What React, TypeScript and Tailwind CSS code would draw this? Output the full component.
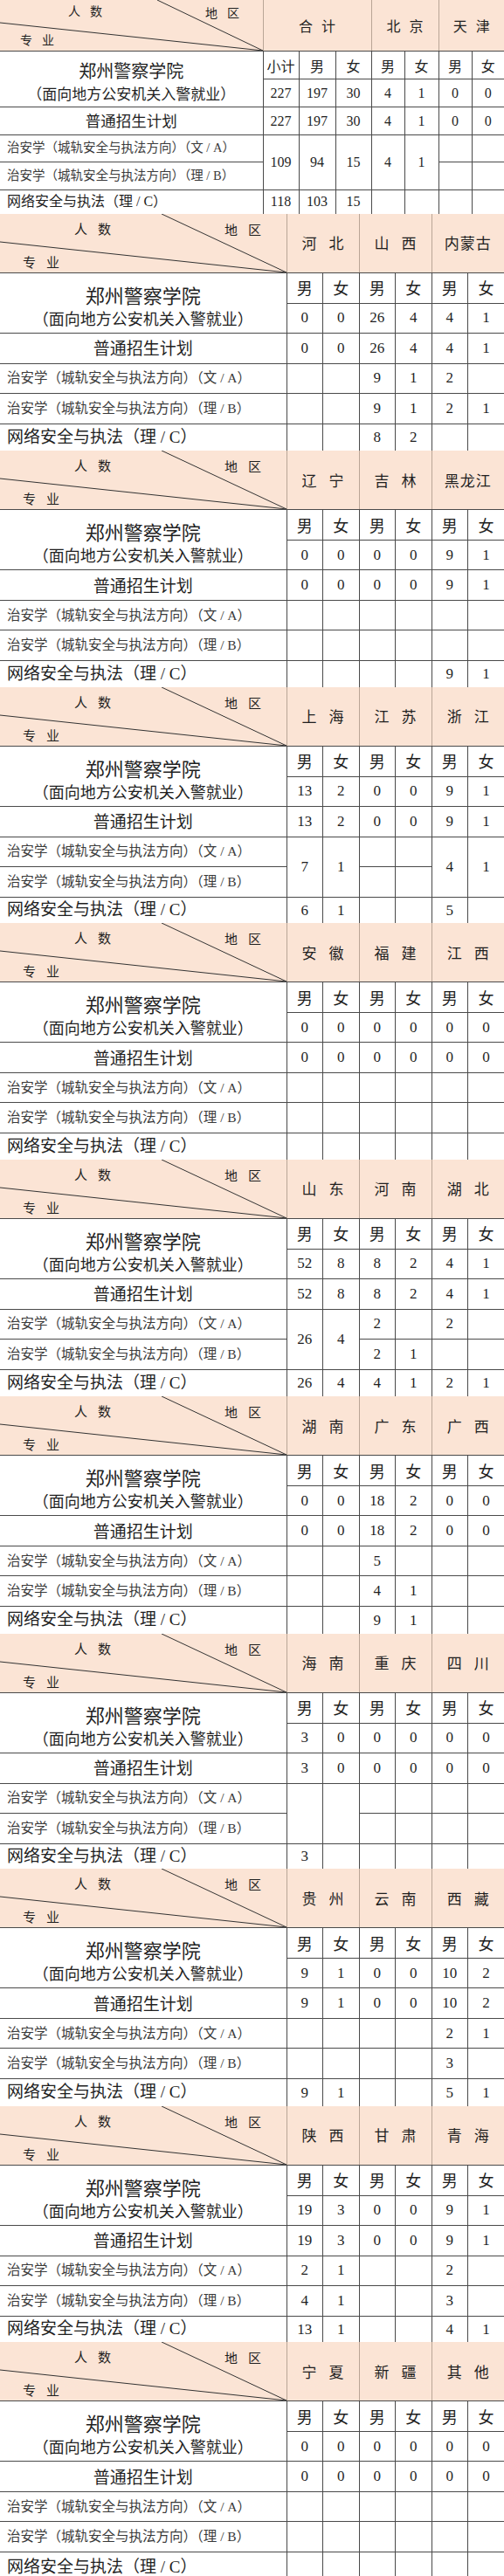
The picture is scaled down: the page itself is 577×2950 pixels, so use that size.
import React from "react";

type Cell = string | { m: string };

interface Sheet {
  regions: string[];
  total: string[];
  a: Cell[];
  b: string[];
  c: string[];
  cH: string;
}

const E6 = ["", "", "", "", "", ""];
const Z6 = ["0", "0", "0", "0", "0", "0"];

const sheets: Sheet[] = [
  { regions: ["河北", "山西", "内蒙古"], total: ["0", "0", "26", "4", "4", "1"], a: ["", "", "9", "1", "2", ""], b: ["", "", "9", "1", "2", "1"], c: ["", "", "8", "2", "", ""], cH: "h-[31px]" },
  { regions: ["辽宁", "吉林", "黑龙江"], total: ["0", "0", "0", "0", "9", "1"], a: E6, b: E6, c: ["", "", "", "", "9", "1"], cH: "h-[30px]" },
  { regions: ["上海", "江苏", "浙江"], total: ["13", "2", "0", "0", "9", "1"], a: [{ m: "7" }, { m: "1" }, "", "", { m: "4" }, { m: "1" }], b: E6, c: ["6", "1", "", "", "5", ""], cH: "h-[30px]" },
  { regions: ["安徽", "福建", "江西"], total: Z6, a: E6, b: E6, c: E6, cH: "h-[30px]" },
  { regions: ["山东", "河南", "湖北"], total: ["52", "8", "8", "2", "4", "1"], a: [{ m: "26" }, { m: "4" }, "2", "", "2", ""], b: ["", "", "2", "1", "", ""], c: ["26", "4", "4", "1", "2", "1"], cH: "h-[31px]" },
  { regions: ["湖南", "广东", "广西"], total: ["0", "0", "18", "2", "0", "0"], a: ["", "", "5", "", "", ""], b: ["", "", "4", "1", "", ""], c: ["", "", "9", "1", "", ""], cH: "h-[31px]" },
  { regions: ["海南", "重庆", "四川"], total: ["3", "0", "0", "0", "0", "0"], a: [{ m: "" }, { m: "" }, "", "", "", ""], b: E6, c: ["3", "", "", "", "", ""], cH: "h-[28px]" },
  { regions: ["贵州", "云南", "西藏"], total: ["9", "1", "0", "0", "10", "2"], a: ["", "", "", "", "2", "1"], b: ["", "", "", "", "3", ""], c: ["9", "1", "", "", "5", "1"], cH: "h-[31px]" },
  { regions: ["陕西", "甘肃", "青海"], total: ["19", "3", "0", "0", "9", "1"], a: ["2", "1", "", "", "2", ""], b: ["4", "1", "", "", "3", ""], c: ["13", "1", "", "", "4", "1"], cH: "h-[30px]" },
  { regions: ["宁夏", "新疆", "其他"], total: Z6, a: E6, b: E6, c: E6, cH: "h-[34px]" },
];

const first = {
  regions: [
    { name: "合计", span: 3 },
    { name: "北京", span: 2 },
    { name: "天津", span: 2 },
  ],
  sub: ["小计", "男", "女", "男", "女", "男", "女"],
  total: ["227", "197", "30", "4", "1", "0", "0"],
  a: [{ m: "109" }, { m: "94" }, { m: "15" }, { m: "4" }, { m: "1" }, "", ""] as Cell[],
  b: ["", "", "", "", "", "", ""],
  c: ["118", "103", "15", "", "", "", ""],
};

const cjk = "font-['Noto_Sans_CJK_SC',sans-serif]";
const serif = "font-['Liberation_Serif','Noto_Sans_CJK_SC',serif]";
const line = "border-[#4a4a4a]";

function DiagHead({ small }: { small?: boolean }) {
  if (small) {
    return (
      <div className={`relative h-[58px] w-[301px] overflow-hidden text-[14px] leading-[18px] font-normal text-[#1f1f1f] ${cjk}`}>
        <svg className="absolute inset-0" width="301" height="58">
          <line x1="180" y1="0" x2="301" y2="58" stroke="#333" strokeWidth="1" />
          <line x1="0" y1="26" x2="301" y2="58" stroke="#333" strokeWidth="1" />
        </svg>
        <span className="absolute left-[78px] top-[3px] tracking-[11px]">人数</span>
        <span className="absolute left-[235px] top-[5px] tracking-[11px]">地区</span>
        <span className="absolute left-[23px] top-[36px] tracking-[11px]">专业</span>
      </div>
    );
  }
  return (
    <div className={`relative h-[67px] w-[328px] overflow-hidden text-[15px] leading-[20px] font-normal text-[#1f1f1f] ${cjk}`}>
      <svg className="absolute inset-0" width="328" height="67">
        <line x1="185" y1="0" x2="328" y2="67" stroke="#333" strokeWidth="1" />
        <line x1="0" y1="32" x2="328" y2="67" stroke="#333" strokeWidth="1" />
      </svg>
      <span className="absolute left-[85px] top-[7px] tracking-[12px]">人数</span>
      <span className="absolute left-[257px] top-[8px] tracking-[12px]">地区</span>
      <span className="absolute left-[26px] top-[45px] tracking-[12px]">专业</span>
    </div>
  );
}

function cellCls(i: number, n: number, bottom: boolean) {
  return `p-0 text-center align-middle ${line} ${i < n - 1 ? "border-r" : ""} ${bottom ? "border-b" : ""}`;
}

function Table({
  small,
  regions,
  sub,
  total,
  a,
  b,
  c,
  cH,
}: {
  small?: boolean;
  regions: { name: string; span: number }[];
  sub: string[];
  total: string[];
  a: Cell[];
  b: string[];
  c: string[];
  cH: string;
}) {
  const n = sub.length;
  const cols = small
    ? ["w-[41px]", "w-[42px]", "w-[41px]", "w-[38px]", "w-[39px]", "w-[38px]", "w-[37px]"]
    : ["w-[41.5px]", "w-[41.5px]", "w-[41.5px]", "w-[41.5px]", "w-[41.5px]", "w-[41.5px]"];
  const z = small
    ? {
        head: "h-[58px]",
        r1: "h-[32px]",
        r2: "h-[32px]",
        r3: "h-[32px]",
        r4: "h-[31px]",
        r5: "h-[32px]",
        region: "text-[16px]",
        sub: "text-[16px]",
        num: "text-[16px]",
        school: "text-[20px] leading-[26px]",
        school2: "text-[17px] leading-[26px]",
        schoolBox: "pt-[6px]",
        plan: "text-[17.5px]",
        ab: "text-[14.5px]",
        cl: "text-[16px]",
      }
    : {
        head: "h-[67px]",
        r1: "h-[35px]",
        r2: "h-[34px]",
        r3: "h-[35px]",
        r4: "h-[34px]",
        r5: "h-[35px]",
        region: "text-[17px]",
        sub: "text-[18px]",
        num: "text-[17px]",
        school: "text-[22px] leading-[27px]",
        school2: "text-[18px] leading-[27px]",
        schoolBox: "pt-[8px]",
        plan: "text-[19px]",
        ab: "text-[15.5px]",
        cl: "text-[19px]",
      };

  const spaced = (name: string) =>
    name.length === 2
      ? small
        ? "tracking-[10px] pl-[10px]"
        : "tracking-[14px] pl-[14px]"
      : "tracking-[1px]";

  const merged = a.map((x) => typeof x === "object");

  return (
    <table className="w-[577px] table-fixed border-collapse text-[#1f1f1f]">
      <colgroup>
        <col className={small ? "w-[301px]" : "w-[328px]"} />
        {cols.map((w, i) => (
          <col key={i} className={w} />
        ))}
      </colgroup>
      <tbody>
        <tr className={z.head}>
          <th className={`p-0 bg-[#fbe4d5] font-normal border-b border-r ${line} border-r-[#b9a596]`}>
            <DiagHead small={small} />
          </th>
          {regions.map((r, i) => (
            <th
              key={i}
              colSpan={r.span}
              className={`p-0 bg-[#fbe4d5] border-b ${line} font-normal ${cjk} ${z.region} ${
                i < regions.length - 1 ? "border-r border-r-[#b9a596]" : ""
              }`}
            >
              <span className={spaced(r.name)}>{r.name}</span>
            </th>
          ))}
        </tr>
        <tr className={z.r1}>
          <td rowSpan={2} className={`p-0 text-center align-middle border-r border-b ${line} ${cjk}`}>
            <div className={z.schoolBox}>
              <div className={z.school}>郑州警察学院</div>
              <div className={z.school2}>（面向地方公安机关入警就业）</div>
            </div>
          </td>
          {sub.map((s, i) => (
            <td key={i} className={`${cellCls(i, n, true)} ${cjk} ${z.sub}`}>
              {s}
            </td>
          ))}
        </tr>
        <tr className={z.r2}>
          {total.map((v, i) => (
            <td key={i} className={`${cellCls(i, n, true)} ${serif} ${z.num}`}>
              {v}
            </td>
          ))}
        </tr>
        <tr className={z.r3}>
          <td className={`p-0 text-center align-middle border-r border-b ${line} ${cjk} ${z.plan}`}>普通招生计划</td>
          {total.map((v, i) => (
            <td key={i} className={`${cellCls(i, n, true)} ${serif} ${z.num}`}>
              {v}
            </td>
          ))}
        </tr>
        <tr className={z.r4}>
          <td className={`p-0 pl-[8px] text-left align-middle whitespace-nowrap border-r border-b ${line} text-[#3a3a3a] ${serif} ${z.ab}`}>
            治安学（城轨安全与执法方向）（文 / A）
          </td>
          {a.map((x, i) =>
            typeof x === "object" ? (
              <td key={i} rowSpan={2} className={`${cellCls(i, n, true)} ${serif} ${z.num}`}>
                {x.m}
              </td>
            ) : (
              <td key={i} className={`${cellCls(i, n, true)} ${serif} ${z.num}`}>
                {x}
              </td>
            )
          )}
        </tr>
        <tr className={z.r5}>
          <td className={`p-0 pl-[8px] text-left align-middle whitespace-nowrap border-r border-b ${line} text-[#3a3a3a] ${serif} ${z.ab}`}>
            治安学（城轨安全与执法方向）（理 / B）
          </td>
          {b.map((v, i) =>
            merged[i] ? null : (
              <td key={i} className={`${cellCls(i, n, true)} ${serif} ${z.num}`}>
                {v}
              </td>
            )
          )}
        </tr>
        <tr className={cH}>
          <td className={`p-0 pl-[8px] text-left align-middle whitespace-nowrap border-r ${line} ${serif} ${z.cl}`}>
            网络安全与执法（理 / C）
          </td>
          {c.map((v, i) => (
            <td key={i} className={`${cellCls(i, n, false)} ${serif} ${z.num}`}>
              {v}
            </td>
          ))}
        </tr>
      </tbody>
    </table>
  );
}

export default function App() {
  return (
    <div className="w-[577px] bg-white">
      <Table small regions={first.regions} sub={first.sub} total={first.total} a={first.a} b={first.b} c={first.c} cH="h-[27px]" />
      {sheets.map((s, i) => (
        <Table
          key={i}
          regions={s.regions.map((name) => ({ name, span: 2 }))}
          sub={["男", "女", "男", "女", "男", "女"]}
          total={s.total}
          a={s.a}
          b={s.b}
          c={s.c}
          cH={s.cH}
        />
      ))}
    </div>
  );
}
